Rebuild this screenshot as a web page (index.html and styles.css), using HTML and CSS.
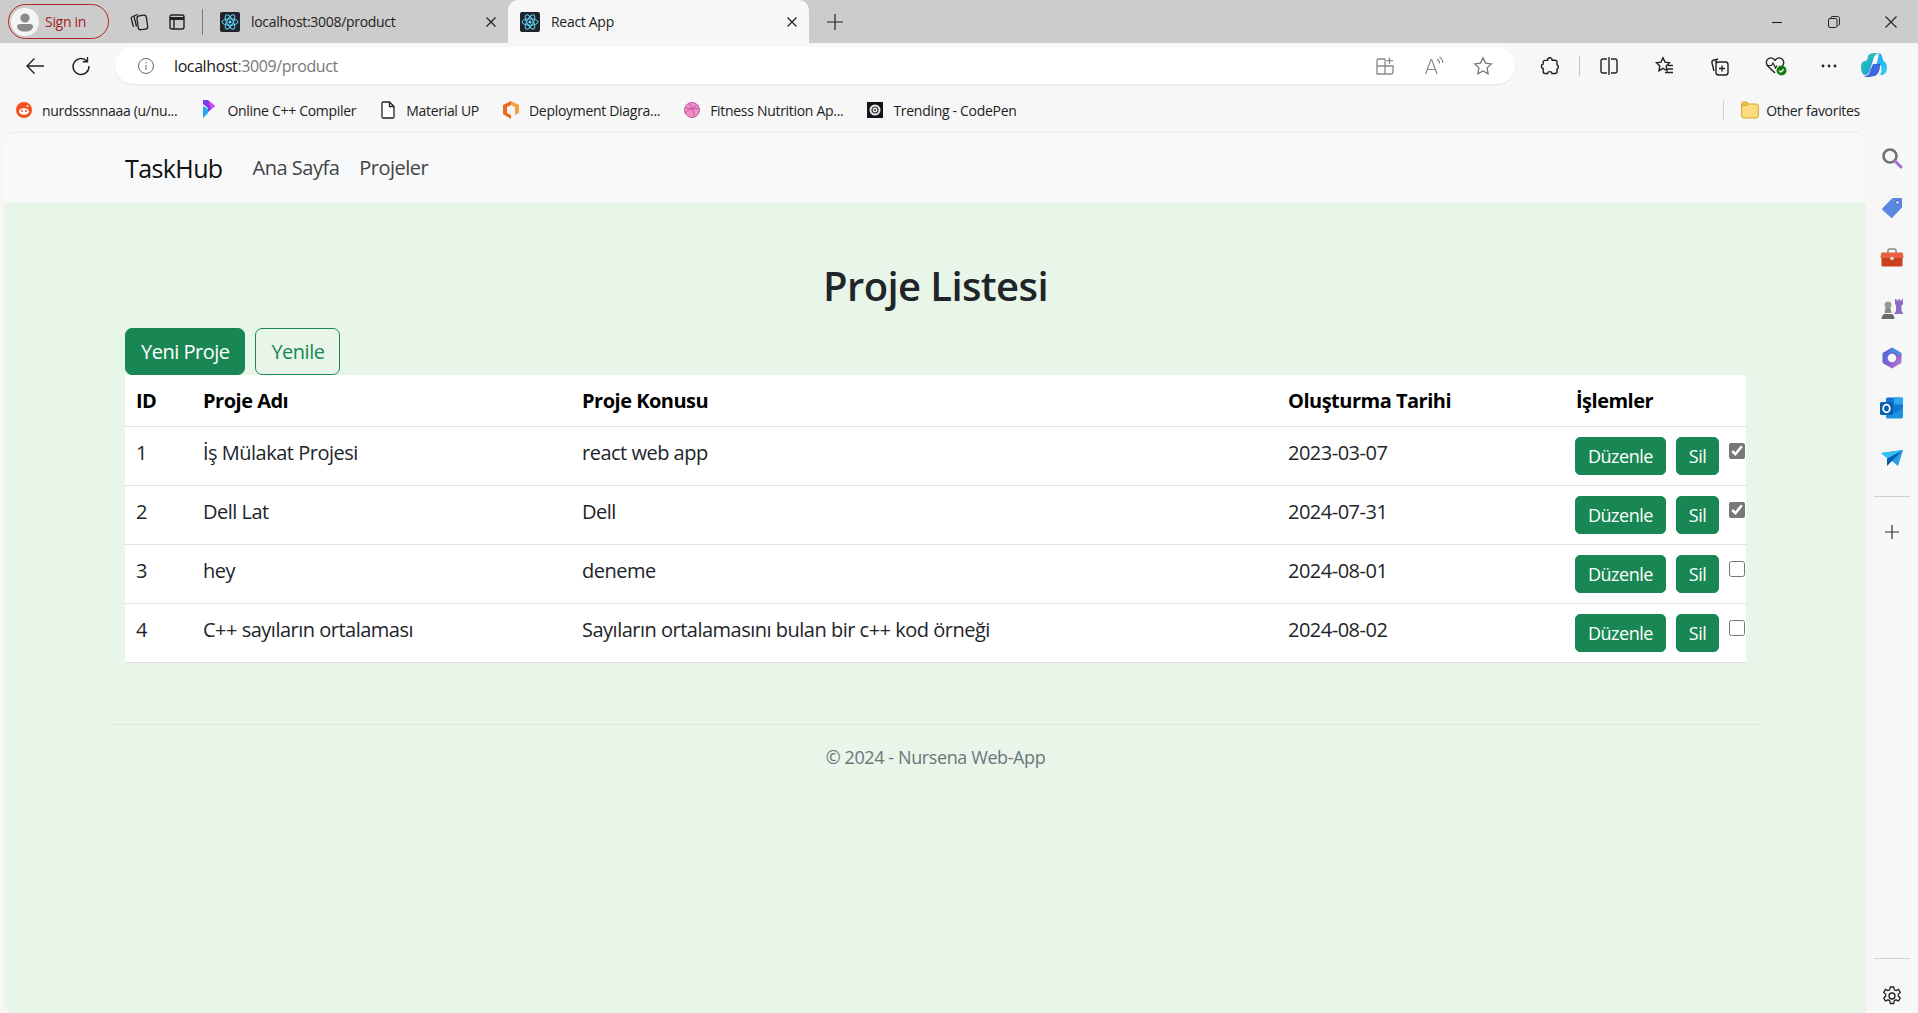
FILE: index.html
```html
<!DOCTYPE html>
<html lang="en">
<head>
<meta charset="UTF-8" />
<title>React App</title>
<link rel="stylesheet" href="styles.css">
</head>
<body>

<svg class="defs" width="0" height="0">
  <symbol id="react" viewBox="0 0 20 20">
    <rect width="20" height="20" rx="2" fill="#20232a"/>
    <g fill="none" stroke="#61dafb" stroke-width="1">
      <ellipse cx="10" cy="10" rx="8" ry="3.2"/>
      <ellipse cx="10" cy="10" rx="8" ry="3.2" transform="rotate(60 10 10)"/>
      <ellipse cx="10" cy="10" rx="8" ry="3.2" transform="rotate(120 10 10)"/>
    </g>
    <circle cx="10" cy="10" r="1.6" fill="#61dafb"/>
  </symbol>
</svg>

<div class="tabstrip">
  <div class="signin">
    <span class="avatar">
      <svg width="28" height="28" viewBox="0 0 28 28"><circle cx="14" cy="14" r="14" fill="#f4f4f4"/><circle cx="14" cy="10" r="4.6" fill="#8a8a8a"/><path d="M6 18.5c0-1.6 1.2-2.5 3-2.5h10c1.800 0 3 .9 3 2.500 0 3-3.500 5-8 5s-8-2-8-5z" fill="#8a8a8a"/></svg>
    </span>
    <span>Sign in</span>
  </div>
  <svg class="strip-icon first" width="20" height="20" viewBox="0 0 20 20" fill="none" stroke="#222" stroke-width="1.300"><path d="M6 3.500 3 5c-1 .5-1 1-.7 1.800l2.200 8"/><path d="M9 2.500 6 3.500c-.8.300-1 1-.8 1.700l2.300 9.300"/><rect x="8.500" y="3.500" width="9.500" height="14" rx="2.500" transform="rotate(-8 13 10)"/></svg>
  <svg class="strip-icon" width="20" height="20" viewBox="0 0 20 20" fill="none" stroke="#222" stroke-width="1.400"><rect x="3" y="3" width="14" height="14" rx="2"/><path d="M3 6.500h14" stroke-width="3"/><path d="M7 7v10"/></svg>
  <span class="strip-sep"></span>
  <div class="tab">
    <svg width="20" height="20"><use href="#react"/></svg>
    <span class="tab-title">localhost:3008/product</span>
    <svg class="tab-x" width="12" height="12" viewBox="0 0 12 12" stroke="#222" stroke-width="1.300"><path d="M1.500 1.500l9 9M10.500 1.500l-9 9"/></svg>
  </div>
  <div class="tab active">
    <svg width="20" height="20"><use href="#react"/></svg>
    <span class="tab-title">React App</span>
    <svg class="tab-x" width="12" height="12" viewBox="0 0 12 12" stroke="#222" stroke-width="1.300"><path d="M1.500 1.500l9 9M10.500 1.500l-9 9"/></svg>
  </div>
  <svg class="new-tab" width="18" height="18" viewBox="0 0 18 18" stroke="#222" stroke-width="1.200"><path d="M9 1v16M1 9h16"/></svg>
  <div class="win-btns">
    <svg width="12" height="12" viewBox="0 0 12 12" stroke="#222" stroke-width="1.100"><path d="M1 6.500h10"/></svg>
    <svg width="12" height="12" viewBox="0 0 12 12" fill="none" stroke="#222" stroke-width="1"><rect x=".5" y="2.500" width="8.500" height="9" rx="1.500"/><path d="M3 2.500V1.800C3 1 3.500.5 4.300.5h5.200c1.200 0 2 .8 2 2v5.700c0 .7-.5 1.300-1.500 1.300"/></svg>
    <svg width="12" height="12" viewBox="0 0 12 12" stroke="#222" stroke-width="1.100"><path d="M.5.500l11 11M11.500.500l-11 11"/></svg>
  </div>
</div>

<div class="toolbar">
  <svg class="nav-icon back" width="20" height="20" viewBox="0 0 20 20" fill="none" stroke="#222" stroke-width="1.400"><path d="M19 10H2M9.500 2.500 2 10l7.500 7.500"/></svg>
  <svg class="nav-icon reload" width="20" height="20" viewBox="0 0 20 20" fill="none" stroke="#222" stroke-width="1.400"><path d="M15.800 5A8 8 0 1 0 18 10"/><path d="M16.500 1v4.800h-4.800"/></svg>
  <div class="address">
    <svg width="18" height="18" viewBox="0 0 18 18" fill="none" stroke="#666" stroke-width="1"><circle cx="9" cy="9" r="7.500"/><path d="M9 8v5M9 5v1.400"/></svg>
    <span class="url"><span class="url-host">localhost</span>:3009/product</span>
    <div class="address-end">
      <svg width="20" height="20" viewBox="0 0 20 20" fill="none" stroke="#888" stroke-width="1.300"><path d="M10 3H3.500C2.700 3 2 3.700 2 4.500V18h14.500c.8 0 1.500-.7 1.500-1.500V10H2M10 3v15M14.500 1.500v6.500M11.500 4.700h6.500"/></svg>
      <svg width="20" height="20" viewBox="0 0 20 20" fill="none" stroke="#888" stroke-width="1.200"><path d="M1.500 18 7 3.500h.7L13 18M3.300 13.500h8"/><path d="M13 3c1.500.8 2.500 2.400 2.500 4.500M15.500 1c2 1.200 3.300 3.500 3.300 6"/></svg>
      <svg width="20" height="20" viewBox="0 0 20 20" fill="none" stroke="#777" stroke-width="1.300"><path d="M10 1.800l2.500 5.300 5.800.8-4.200 4 1 5.800-5.100-2.800-5.100 2.800 1-5.800-4.200-4 5.800-.8z"/></svg>
    </div>
  </div>
  <div class="tools">
    <svg width="20" height="20" viewBox="0 0 20 20" fill="none" stroke="#222" stroke-width="1.400"><path d="M8 2.500c1-1.300 3.500-1 4 .8l.1 1h3c1 0 1.900.8 1.900 1.800v2.600c1.700.400 2 3.500 0 4.200v2.900c0 1-.9 1.700-1.900 1.700h-3.100c-.3-2.500-4-2.500-4.300 0H5c-1 0-1.800-.8-1.800-1.800v-3.200c-2.500-.6-2.500-4 0-4.500V6.300c0-1 .8-1.900 1.800-1.900h2.600c0-.8 0-1.300.4-1.900z"/></svg>
    <span class="tool-sep"></span>
    <svg width="20" height="20" viewBox="0 0 20 20" fill="none" stroke="#222" stroke-width="1.400"><path d="M10 1v18M8 3H4c-1.300 0-2 .8-2 2v10c0 1.200.7 2 2 2h4M12 3h4c1.300 0 2 .8 2 2v10c0 1.200-.7 2-2 2h-4"/></svg>
    <svg width="20" height="20" viewBox="0 0 20 20" fill="none" stroke="#222" stroke-width="1.400"><path d="M9 1.800l2 4.300 4.500.6-3.300 3.200.8 4.600-4-2.200-4 2.600.8-5-3.300-3.200 4.500-.6zM14 9.500h5M13.500 13h5.500M11 16.500h8"/></svg>
    <svg width="20" height="20" viewBox="0 0 20 20" fill="none" stroke="#222" stroke-width="1.400"><path d="M5 15 3 7c-.4-1.300.3-2.400 1.400-2.800L9 3"/><path d="M7 5h1c-1 0-1.500.5-1.300 1.300"/><rect x="7" y="6" width="12" height="13" rx="2.500"/><path d="M13 9.500v6M10 12.500h6"/></svg>
    <svg class="health" width="24" height="22" viewBox="0 0 24 22" fill="none"><path d="M11 18 3.800 11C1.500 8.500 2 4.500 5 3.300c2.300-1 4.500 0 6 1.900 1.500-1.900 3.700-2.900 6-1.900 3 1.200 3.500 5 1.500 7.400" stroke="#222" stroke-width="1.400"/><path d="M3.500 10.500h4l1.500-2.500 2.500 5 1.500-2.500" stroke="#222" stroke-width="1.200"/><circle cx="17.500" cy="15.500" r="5" fill="#107c10"/><path d="M15.200 15.600l1.600 1.600 3-3" stroke="#fff" stroke-width="1.300"/></svg>
    <svg width="20" height="20" viewBox="0 0 20 20" fill="#222"><circle cx="4" cy="10" r="1.400"/><circle cx="10" cy="10" r="1.400"/><circle cx="16" cy="10" r="1.400"/></svg>
  </div>
  <svg class="copilot" width="26" height="28" viewBox="0 0 26 28">
    <defs>
      <linearGradient id="copilotA" x1="0" y1="0" x2="1" y2="1"><stop offset="0" stop-color="#2bd1a8"/><stop offset="1" stop-color="#1b8fe6"/></linearGradient>
      <linearGradient id="copilotB" x1="0" y1="0" x2="1" y2="1"><stop offset="0" stop-color="#1aa5f0"/><stop offset="1" stop-color="#31d0ef"/></linearGradient>
    </defs>
    <path d="M7 4C9 1 11 1 17 1c-2.500 1-4 3-5 7l-3 10c-1 3-3 5-5 5-2 0-4-3-4-8 0-4 2-6 4-6 1.500 0 2.500-1 3-5z" fill="url(#copilotA)"/>
    <path d="M17 1c2 0 3.500 1 4 3l1.500 5c1.500.5 3.500 3 3.500 6 0 6-3 8-5 8-1.500 0-1-.5-2-.5h-1.500c3 0 3-3 3-7 0-3-4-3-5-3l2-8c.5-2 0-3 0-3.500z" fill="url(#copilotB)"/>
    <path d="M19 12c.5 5-2 12-6 12-4 1-8 2-10 0 3 0 5-1 6-5l3-7z" fill="#1d4fd8" opacity=".85"/>
  </svg>
</div>

<div class="bookmarks">
  <a class="bookmark">
    <svg width="16" height="16" viewBox="0 0 16 16"><circle cx="8" cy="8" r="8" fill="#f4511e"/><ellipse cx="8" cy="9.500" rx="5" ry="3.300" fill="#fff"/><circle cx="6" cy="9" r="1" fill="#f4511e"/><circle cx="10" cy="9" r="1" fill="#f4511e"/><circle cx="11.500" cy="4" r="1" fill="#fff"/></svg>
    nurdsssnnaaa (u/nu...
  </a>
  <a class="bookmark">
    <svg width="16" height="20" viewBox="0 0 16 20"><path d="M2 0h5l7 6-7 6V8L2 4z" fill="#7c3aed"/><path d="M2 6l5 3v4l-5 5z" fill="#22a6f2"/><path d="M7 0l7 6-4 3z" fill="#d946ef"/></svg>
    Online C++ Compiler
  </a>
  <a class="bookmark">
    <svg width="16" height="18" viewBox="0 0 16 18" fill="#fff" stroke="#222" stroke-width="1.300"><path d="M2 2.200C2 1.400 2.500 1 3.200 1h6.300L14 5.500v10.300c0 .7-.5 1.200-1.200 1.200H3.200C2.500 17 2 16.500 2 15.800z"/><path d="M9.500 1v4.500H14" fill="none"/></svg>
    Material UP
  </a>
  <a class="bookmark">
    <svg width="16" height="18" viewBox="0 0 16 18"><path d="M8 0l8 4v8l-4 2V6L8 4z" fill="#f59e42"/><path d="M8 0 0 4v9l8 5v-4l-4-2V6l4-2z" fill="#ea6b1e"/></svg>
    Deployment Diagra...
  </a>
  <a class="bookmark">
    <svg width="16" height="16" viewBox="0 0 16 16" fill="#ee8fc8" stroke="#c04e9b" stroke-width=".9"><circle cx="8" cy="8" r="7.500"/><path d="M1.500 6c4 1 9 0 11.500-3.500M5 1.500c3 3.500 5 8 5.500 13M1.500 11c2-3 7-5.500 13-4" fill="none"/></svg>
    Fitness Nutrition Ap...
  </a>
  <a class="bookmark">
    <svg width="16" height="16" viewBox="0 0 16 16"><rect width="16" height="16" fill="#14141c"/><circle cx="8" cy="8" r="5.500" fill="#e8e8e8"/><circle cx="8" cy="8" r="3" fill="none" stroke="#333" stroke-width="1.200"/><circle cx="8" cy="8" r="1" fill="#333"/></svg>
    Trending - CodePen
  </a>
  <span class="bookmarks-sep"></span>
  <a class="bookmark other">
    <svg width="18" height="18" viewBox="0 0 18 18"><rect x=".7" y="3" width="16.600" height="14" rx="2" fill="#fbdc7e" stroke="#d6a32c"/><path d="M.7 5V2.500C.7 1.500 1.300 1 2.200 1h3.300c.8 0 1.500.8 1.500 1.500S6.500 4.500 5.500 4.500H1z" fill="#f5c542" stroke="#d6a32c"/></svg>
    Other favorites
  </a>
</div>

<div class="browser-body">
  <div class="page">
    <nav class="navbar">
      <a class="brand">TaskHub</a>
      <a class="nav-link">Ana Sayfa</a>
      <a class="nav-link">Projeler</a>
    </nav>

    <main class="container">
      <h1>Proje Listesi</h1>
      <div class="actions">
        <button class="btn btn-green">Yeni Proje</button>
        <button class="btn btn-outline">Yenile</button>
      </div>
      <table>
        <thead>
          <tr>
            <th class="col-id">ID</th>
            <th class="col-name">Proje Adı</th>
            <th class="col-topic">Proje Konusu</th>
            <th class="col-date">Oluşturma Tarihi</th>
            <th>İşlemler</th>
          </tr>
        </thead>
        <tbody>
          <tr>
            <td>1</td><td>İş Mülakat Projesi</td><td>react web app</td><td>2023-03-07</td>
            <td class="row-actions"><button class="btn-sm">Düzenle</button><button class="btn-sm">Sil</button><input type="checkbox" checked /></td>
          </tr>
          <tr>
            <td>2</td><td>Dell Lat</td><td>Dell</td><td>2024-07-31</td>
            <td class="row-actions"><button class="btn-sm">Düzenle</button><button class="btn-sm">Sil</button><input type="checkbox" checked /></td>
          </tr>
          <tr>
            <td>3</td><td>hey</td><td>deneme</td><td>2024-08-01</td>
            <td class="row-actions"><button class="btn-sm">Düzenle</button><button class="btn-sm">Sil</button><input type="checkbox" /></td>
          </tr>
          <tr>
            <td>4</td><td>C++ sayıların ortalaması</td><td>Sayıların ortalamasını bulan bir c++ kod örneği</td><td>2024-08-02</td>
            <td class="row-actions"><button class="btn-sm">Düzenle</button><button class="btn-sm">Sil</button><input type="checkbox" /></td>
          </tr>
        </tbody>
      </table>
      <footer>© 2024 - Nursena Web-App</footer>
    </main>
  </div>

  <aside class="sidebar">
    <svg width="24" height="24" viewBox="0 0 24 24" fill="none"><circle cx="10" cy="10" r="6.500" stroke="#707070" stroke-width="2.600"/><path d="M15 15l6 6" stroke="#a06fd6" stroke-width="3" stroke-linecap="round"/></svg>
    <svg width="24" height="24" viewBox="0 0 24 24"><path d="M13 2h8c.6 0 1 .4 1 1v8c0 .5-.2.800-.5 1.100l-9 9.500c-.5.500-1.200.500-1.700 0L2.500 14c-.5-.5-.5-1.200 0-1.700l9.400-9.800c.3-.3.700-.5 1.100-.5z" fill="#5a87e0"/><circle cx="17.500" cy="6.500" r="1.700" fill="#fff" stroke="#2f4f9e" stroke-width=".8"/></svg>
    <svg width="24" height="24" viewBox="0 0 24 24"><path d="M8 7V4.500C8 3.700 8.700 3 9.500 3h5c.8 0 1.500.7 1.500 1.500V7" fill="none" stroke="#888" stroke-width="1.500"/><path d="M1 8c0-1 .6-1.500 1.500-1.500h19c.9 0 1.500.5 1.500 1.500l.5 4H.5z" fill="#e8603c"/><path d="M1.500 12h21v7c0 1-.6 1.500-1.500 1.500H3c-.9 0-1.500-.5-1.500-1.500z" fill="#c8401c"/><circle cx="12" cy="12.500" r="1.800" fill="#ddd"/></svg>
    <svg width="24" height="24" viewBox="0 0 24 24"><path d="M15 3h1.500v1.500h2V3h1.500v1.500h2V3H23v5l-1.500 1.500V15l1.500 2v1H14.500v-1l1.500-2V9.500L15 8z" fill="#8f6cc4"/><circle cx="8" cy="9" r="3.500" fill="#9a9a9a"/><path d="M5.500 12h5l1 5h-7z" fill="#8a8a8a"/><path d="M1.500 23c0-3 2-5 3-5h7c1.500 0 3 2 3 5z" fill="#6a6a6a"/></svg>
    <svg width="24" height="24" viewBox="0 0 24 24" fill="none"><defs><linearGradient id="m365" x1="0" y1="0" x2="1" y2="1"><stop offset="0" stop-color="#3b6fd8"/><stop offset=".6" stop-color="#8a5fd0"/><stop offset="1" stop-color="#d28adf"/></linearGradient></defs><path d="M12 1.500l9.500 5.500v10L12 22.500 2.500 17V7z" fill="url(#m365)"/><circle cx="12" cy="12" r="4.300" fill="#f7f7f7"/><path d="M12 1.500l9.500 5.500v3l-5-2.500c-3-1.500-6-1-8.500.5z" fill="#36a3e8" opacity=".7"/></svg>
    <svg width="24" height="24" viewBox="0 0 24 24"><rect x="6" y="1.500" width="17" height="20" rx="1.500" fill="#0f78d4"/><rect x="14" y="1.500" width="9" height="7" fill="#2ea5ec"/><path d="M6 12l8.500 5L23 12v9c0 .8-.7 1.500-1.500 1.500h-14C6.700 22.500 6 21.800 6 21z" fill="#1b94e0"/><rect x="0" y="6" width="13" height="13" rx="1.500" fill="#0a5fb0"/><ellipse cx="6.500" cy="12.500" rx="3.300" ry="3.800" fill="none" stroke="#fff" stroke-width="1.800"/></svg>
    <svg width="24" height="24" viewBox="0 0 24 24"><path d="M1 7l22-3-5 16-6-5z" fill="#22a0ea"/><path d="M23 4 7 12.500V20l5-5z" fill="#0b5ca8"/><path d="M1 7l6 5.500L23 4z" fill="#34c0f2"/></svg>
    <span class="side-sep"></span>
    <svg width="18" height="18" viewBox="0 0 18 18" stroke="#333" stroke-width="1.200"><path d="M9 2v14M2 9h14"/></svg>
    <span class="side-spacer"></span>
    <span class="side-sep"></span>
    <svg width="22" height="22" viewBox="0 0 22 22" fill="none" stroke="#222" stroke-width="1.300"><circle cx="11" cy="11" r="3"/><path d="M9.300 2h3.400l.6 2.800 1.700.8 2.500-1.200 1.800 3-2 1.800v2l2 1.800-1.800 3-2.500-1.200-1.700.8-.6 2.900H9.300l-.6-2.900-1.700-.8-2.500 1.200-1.800-3 2-1.800v-2l-2-1.800 1.800-3 2.500 1.200 1.700-.8z"/></svg>
  </aside>
</div>

</body>
</html>
```

FILE: styles.css
```css
* {
  box-sizing: border-box;
}

html, body {
  margin: 0;
  height: 100%;
}

body {
  display: flex;
  flex-direction: column;
  height: 1013px;
  overflow: hidden;
  font-family: "Open Sans", "Noto Sans", sans-serif;
  background: #f7f7f7;
  color: #212529;
}

.defs {
  display: none;
}

/* browser chrome */
.tabstrip {
  display: flex;
  align-items: center;
  height: 43px;
  background: #cccccc;
  font-size: 14px;
}

.signin {
  display: flex;
  align-items: center;
  gap: 6px;
  width: 101px;
  height: 35px;
  margin-left: 8px;
  padding-left: 2px;
  border: 1.500px solid #b3261e;
  border-radius: 18px;
  color: #a5221b;
  letter-spacing: -0.3px;
}

.avatar {
  display: flex;
}

.strip-icon {
  margin-left: 18px;
}

.strip-icon.first {
  margin-left: 20px;
}

.strip-sep {
  width: 1px;
  height: 26px;
  margin: 0 7px 0 15px;
  background: #777;
}

.tab {
  display: flex;
  align-items: center;
  width: 298px;
  height: 43px;
  padding: 0 11px 0 10px;
  color: #222;
  letter-spacing: -0.3px;
}

.tab.active {
  width: 301px;
  padding-left: 12px;
  background: #f7f7f7;
  border-radius: 10px 10px 0 0;
}

.tab-title {
  flex: 1;
  margin-left: 11px;
}

.new-tab {
  margin-left: 17px;
}

.win-btns {
  display: flex;
  gap: 45px;
  margin-left: auto;
  padding-right: 21px;
}

.toolbar {
  display: flex;
  align-items: center;
  height: 45px;
  background: #f7f7f7;
}

.nav-icon.back {
  margin-left: 25px;
}

.nav-icon.reload {
  margin-left: 26px;
}

.address {
  display: flex;
  align-items: center;
  width: 1400px;
  height: 37px;
  margin-left: 24px;
  padding: 0 22px 0 22px;
  background: #fff;
  border-radius: 19px;
  box-shadow: 0 1px 2px rgba(0, 0, 0, 0.08);
}

.url {
  margin-left: 19px;
  font-size: 16px;
  letter-spacing: -0.4px;
  color: #777;
}

.url-host {
  color: #1a1a1a;
}

.address-end {
  display: flex;
  gap: 29px;
  margin-left: auto;
}

.tools {
  display: flex;
  align-items: center;
  gap: 35px;
  margin-left: 25px;
}

.tool-sep {
  width: 1px;
  height: 20px;
  margin: 0 -16px;
  background: #c4c4c4;
}

.health {
  margin-right: -4px;
}

.copilot {
  margin-left: 22px;
}

.bookmarks {
  display: flex;
  align-items: center;
  height: 44px;
  padding-left: 16px;
  padding-right: 58px;
  background: #f7f7f7;
  font-size: 14px;
  letter-spacing: -0.3px;
  color: #222;
}

.bookmark {
  display: flex;
  align-items: center;
  gap: 10px;
  margin-right: 24px;
  white-space: nowrap;
}

.bookmarks-sep {
  width: 1px;
  height: 20px;
  margin-left: auto;
  margin-right: 17px;
  background: #d0d0d0;
}

.bookmark.other {
  margin-right: 0;
  gap: 7px;
}

.browser-body {
  display: flex;
  flex: 1;
  min-height: 0;
  padding-left: 4px;
}

/* the app */
.page {
  flex: 1;
  background: #e8f5e9;
  border-radius: 10px 10px 0 10px;
  overflow: hidden;
  border-top: 1px solid #ececec;
}

.navbar {
  display: flex;
  align-items: center;
  height: 69px;
  padding-left: 121px;
  background: #f8f9fa;
}

.brand {
  margin-right: 20px;
  font-size: 25px;
  color: #111;
  letter-spacing: -0.6px;
}

.nav-link {
  margin-left: 10px;
  margin-right: 10px;
  font-size: 20px;
  color: #444;
  letter-spacing: -0.5px;
}

.container {
  width: 1621px;
  margin-left: 121px;
}

h1 {
  margin: 60px 0 18px;
  font-size: 40px;
  line-height: 48px;
  font-weight: 600;
  text-align: center;
  letter-spacing: -0.6px;
}

.actions {
  display: flex;
  gap: 10px;
}

.btn {
  height: 47px;
  padding: 0 15px;
  font: inherit;
  font-size: 20px;
  letter-spacing: -0.5px;
  border-radius: 7px;
  border: 1px solid #198754;
}

.btn-green {
  background: #198754;
  color: #fff;
}

.btn-outline {
  background: transparent;
  color: #198754;
}

table {
  width: 100%;
  border-collapse: collapse;
  table-layout: fixed;
  background: #fff;
  font-size: 20px;
  letter-spacing: -0.5px;
}

th {
  height: 51px;
  padding: 0 11px;
  text-align: left;
  font-weight: 700;
  color: #000;
  border-bottom: 1px solid #dee2e6;
}

td {
  height: 59px;
  padding: 0 11px 6px;
  color: #212529;
  border-bottom: 1px solid #dee2e6;
}

.col-id {
  width: 67px;
}

.col-name {
  width: 379px;
}

.col-topic {
  width: 706px;
}

.col-date {
  width: 288px;
}

td.row-actions {
  padding: 0 10px;
}

.row-actions {
  white-space: nowrap;
}

.btn-sm {
  height: 38px;
  margin-right: 10px;
  padding: 0 12px;
  background: #198754;
  color: #fff;
  border: 1px solid #198754;
  border-radius: 5px;
  font: inherit;
  font-size: 18px;
  letter-spacing: -0.5px;
  vertical-align: middle;
}

.row-actions input {
  width: 16px;
  height: 16px;
  margin: 0 0 10px;
  vertical-align: middle;
  accent-color: #777;
}

footer {
  margin-top: 61px;
  margin-left: -15px;
  margin-right: -15px;
  padding-top: 20px;
  border-top: 1px solid #dcebdd;
  text-align: center;
  font-size: 18px;
  letter-spacing: -0.4px;
  color: #6c757d;
}

/* edge sidebar */
.sidebar {
  display: flex;
  flex-direction: column;
  align-items: center;
  gap: 26px;
  width: 52px;
  padding: 14px 0 6px;
  background: #f7f7f7;
}

.side-sep {
  width: 36px;
  height: 1px;
  background: #cfcfcf;
}

.side-spacer {
  flex: 1;
}
```
